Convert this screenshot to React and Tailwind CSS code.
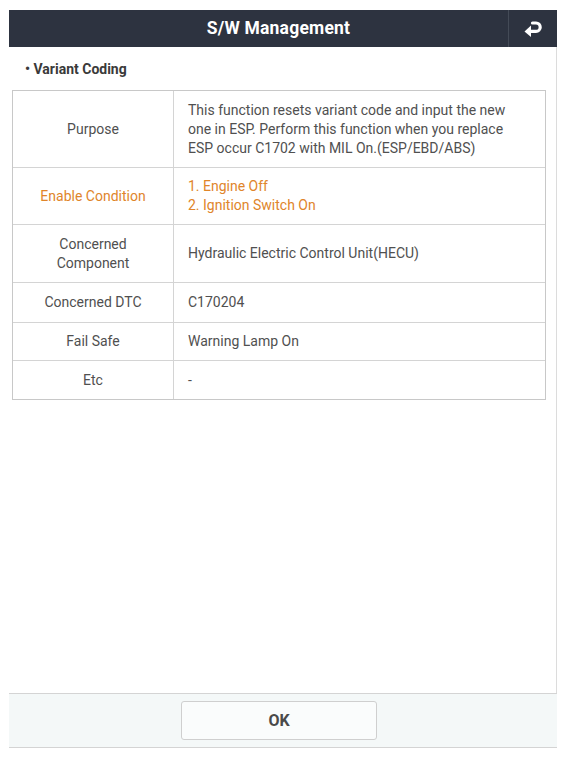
import React from "react";

const rows = [
  { label: "Purpose", value: ["This function resets variant code and input the new", "one in ESP. Perform this function when you replace", "ESP occur C1702 with MIL On.(ESP/EBD/ABS)"], h: "h-[76px]" },
  { label: "Enable Condition", value: ["1. Engine Off", "2. Ignition Switch On"], h: "h-[57px]", orange: true },
  { label: ["Concerned", "Component"], value: ["Hydraulic Electric Control Unit(HECU)"], h: "h-[58px]" },
  { label: "Concerned DTC", value: ["C170204"], h: "h-[40px]" },
  { label: "Fail Safe", value: ["Warning Lamp On"], h: "h-[38px]" },
  { label: "Etc", value: ["-"], h: "h-[39px]" },
];

export default function App() {
  return (
    <div className="w-[569px] h-[758px] bg-white pt-[10px] pl-[9px]" style={{ fontFamily: "Roboto, 'Liberation Sans', sans-serif" }}>
      <div className="w-[548px] h-[738px] flex flex-col">
        <div className="h-[37px] bg-[#2d3340] flex items-stretch">
          <div className="flex-1 flex items-center justify-center pl-[40px]">
            <span className="text-white font-bold text-[17.5px] tracking-[0.2px]">S/W Management</span>
          </div>
          <div className="w-[49px] border-l border-[#444b57] flex items-center justify-center">
            <svg width="20" height="17" viewBox="0 0 20 17">
              <path d="M9.5 3 H13 A4.2 4.2 0 0 1 13 11.4 H6.5" fill="none" stroke="white" strokeWidth="3.2" strokeLinecap="round" />
              <path d="M1.5 11.4 L8 5.6 L8 17 Z" fill="white" />
            </svg>
          </div>
        </div>
        <div className="flex-1 border-r border-[#dcdcdc] pl-[3px] pr-[10px]">
          <div className="h-[43px] flex items-center pl-[13px] pt-[1px] text-[14px] font-bold text-[#3a3a3a]">• Variant Coding</div>
          <div className="border border-[#c8c8c8] text-[14px] text-[#505050] leading-[19px]">
            {rows.map((r, i) => (
              <div key={i} className={`flex ${r.h} ${i > 0 ? "border-t border-[#d4d4d4]" : ""}`}>
                <div className={`w-[161px] shrink-0 border-r border-[#d4d4d4] flex flex-col items-center justify-center text-center ${r.orange ? "text-[#e0852a]" : ""}`}>
                  {(Array.isArray(r.label) ? r.label : [r.label]).map((l, j) => <div key={j}>{l}</div>)}
                </div>
                <div className={`flex-1 flex flex-col justify-center pl-[14px] ${r.orange ? "text-[#e0852a]" : ""}`}>
                  {r.value.map((v, j) => <div key={j}>{v}</div>)}
                </div>
              </div>
            ))}
          </div>
        </div>
        <div className="h-[55px] bg-[#f4f8f8] border-t border-b border-[#d4d4d4] flex items-center justify-center pr-[8px]">
          <div className="w-[196px] h-[39px] bg-[#fafcfc] border border-[#cfcfcf] rounded-[3px] flex items-center justify-center text-[16px] font-bold text-[#4a4a4a]">OK</div>
        </div>
      </div>
    </div>
  );
}
